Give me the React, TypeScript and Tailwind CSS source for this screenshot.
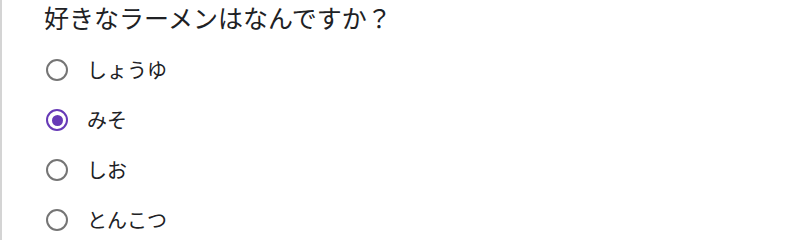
import { useState } from 'react';

const options = ['しょうゆ', 'みそ', 'しお', 'とんこつ'];

export default function App() {
  const [picked, setPicked] = useState('みそ');

  return (
    <div
      className="w-[800px] h-[240px] bg-white border-l-2 border-[#d4d4d4] pl-[42px] overflow-hidden text-[#202124]"
      style={{ fontFamily: '"Noto Sans CJK JP", "Noto Sans", sans-serif' }}
    >
      <h1 className="h-[45px] pt-[1px] text-[25px] leading-[32px]">好きなラーメンはなんですか？</h1>

      <div className="flex flex-col">
        {options.map((opt) => {
          const on = picked === opt;
          return (
            <label
              key={opt}
              className="h-[50px] flex items-center gap-[19px] cursor-pointer"
              onClick={() => setPicked(opt)}
            >
              <span
                className={`w-[22px] h-[22px] rounded-full border-2 flex items-center justify-center ml-[2px] ${
                  on ? 'border-[#673ab7]' : 'border-[#757575]'
                }`}
              >
                {on && <span className="w-[11px] h-[11px] rounded-full bg-[#673ab7]" />}
              </span>
              <span className="text-[20px]">{opt}</span>
            </label>
          );
        })}
      </div>
    </div>
  );
}
